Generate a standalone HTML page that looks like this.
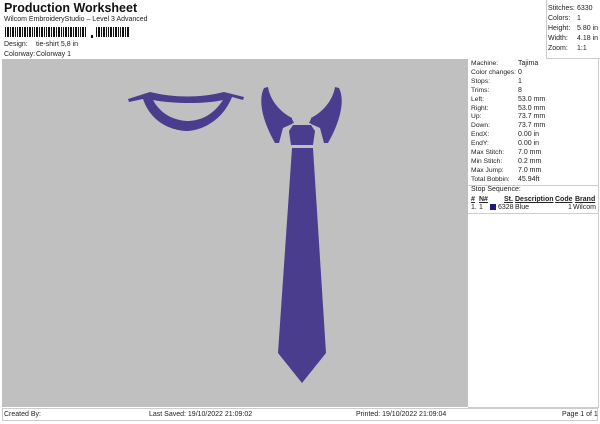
<!DOCTYPE html>
<html><head><style>
body{margin:0;width:600px;height:424px;background:#fff;font-family:"Liberation Sans",sans-serif;position:relative;overflow:hidden;color:#222}
.a{position:absolute;white-space:nowrap}
.s{font-size:7px}
</style></head><body>
<div class="a" style="left:4px;top:1px;font-size:12.5px;font-weight:bold;color:#111">Production Worksheet</div>
<div class="a s" style="left:4px;top:16px">Wilcom EmbroideryStudio – Level 3 Advanced</div>
<svg class="a" style="left:5px;top:27px" width="125" height="12">
<g fill="#111">
<rect x="0" y="0" width="1" height="10"/><rect x="2" y="0" width="2" height="10"/><rect x="5" y="0" width="1" height="10"/><rect x="7" y="0" width="2" height="10"/><rect x="10" y="0" width="1" height="10"/><rect x="12" y="0" width="1" height="10"/><rect x="14" y="0" width="2" height="10"/><rect x="17" y="0" width="1" height="10"/><rect x="19" y="0" width="2" height="10"/><rect x="22" y="0" width="1" height="10"/><rect x="24" y="0" width="2" height="10"/><rect x="27" y="0" width="1" height="10"/><rect x="29" y="0" width="1" height="10"/><rect x="31" y="0" width="2" height="10"/><rect x="34" y="0" width="1" height="10"/><rect x="36" y="0" width="2" height="10"/><rect x="39" y="0" width="1" height="10"/><rect x="41" y="0" width="1" height="10"/><rect x="43" y="0" width="2" height="10"/><rect x="46" y="0" width="1" height="10"/><rect x="48" y="0" width="2" height="10"/><rect x="51" y="0" width="1" height="10"/><rect x="53" y="0" width="2" height="10"/><rect x="56" y="0" width="1" height="10"/><rect x="58" y="0" width="1" height="10"/><rect x="60" y="0" width="2" height="10"/><rect x="63" y="0" width="1" height="10"/><rect x="65" y="0" width="2" height="10"/><rect x="68" y="0" width="1" height="10"/><rect x="70" y="0" width="2" height="10"/><rect x="73" y="0" width="1" height="10"/><rect x="75" y="0" width="1" height="10"/><rect x="77" y="0" width="2" height="10"/><rect x="80" y="0" width="1" height="10"/>
<rect x="86" y="8" width="2" height="3"/>
<rect x="91" y="0" width="1" height="10"/><rect x="93" y="0" width="2" height="10"/><rect x="96" y="0" width="1" height="10"/><rect x="98" y="0" width="2" height="10"/><rect x="101" y="0" width="1" height="10"/><rect x="103" y="0" width="1" height="10"/><rect x="105" y="0" width="2" height="10"/><rect x="108" y="0" width="1" height="10"/><rect x="110" y="0" width="2" height="10"/><rect x="113" y="0" width="1" height="10"/><rect x="115" y="0" width="1" height="10"/><rect x="117" y="0" width="2" height="10"/><rect x="120" y="0" width="1" height="10"/><rect x="122" y="0" width="2" height="10"/>
</g></svg>
<div class="a s" style="left:4px;top:41px">Design:</div><div class="a s" style="left:36px;top:41px">tie-shirt 5,8 in</div>
<div class="a s" style="left:4px;top:51px">Colorway:</div><div class="a s" style="left:36px;top:51px">Colorway 1</div>

<div class="a" style="left:546px;top:0;width:53px;height:58px;border-left:1px solid #ccc;border-right:1px solid #ccc;border-bottom:1px solid #ccc"></div>
<div class="a s" style="left:548px;top:4px;line-height:10px">Stitches:<br>Colors:<br>Height:<br>Width:<br>Zoom:</div>
<div class="a s" style="left:577px;top:4px;line-height:10px">6330<br>1<br>5.80 in<br>4.18 in<br>1:1</div>

<div class="a" style="left:2px;top:59px;width:466px;height:348px;background:#c0c0c0"></div>
<div class="a" style="left:468px;top:59px;width:130px;height:348px;border-right:1px solid #ccc;border-bottom:1px solid #ccc"></div>
<div class="a s" style="left:471px;top:60px;line-height:8.9px;font-size:6.7px">Machine:<br>Color changes:<br>Stops:<br>Trims:<br>Left:<br>Right:<br>Up:<br>Down:<br>EndX:<br>EndY:<br>Max Stitch:<br>Min Stitch:<br>Max Jump:<br>Total Bobbin:</div>
<div class="a s" style="left:518px;top:60px;line-height:8.9px">Tajima<br>0<br>1<br>8<br>53.0 mm<br>53.0 mm<br>73.7 mm<br>73.7 mm<br>0.00 in<br>0.00 in<br>7.0 mm<br>0.2 mm<br>7.0 mm<br>45.94ft</div>
<div class="a" style="left:468px;top:185px;width:130px;border-top:1px solid #ccc"></div>
<div class="a s" style="left:471px;top:186px">Stop Sequence:</div>
<div class="a s" style="left:471px;top:196px;font-weight:bold;text-decoration:underline">#</div>
<div class="a s" style="left:479px;top:196px;font-weight:bold;text-decoration:underline">N#</div>
<div class="a s" style="left:504px;top:196px;font-weight:bold;text-decoration:underline">St.</div>
<div class="a s" style="left:515px;top:196px;font-weight:bold;text-decoration:underline">Description</div>
<div class="a s" style="left:555px;top:196px;font-weight:bold;text-decoration:underline">Code</div>
<div class="a s" style="left:575px;top:196px;font-weight:bold;text-decoration:underline">Brand</div>
<div class="a s" style="left:471px;top:204px">1.</div><div class="a s" style="left:479px;top:204px">1</div>
<div class="a" style="left:490px;top:204px;width:6px;height:6px;background:#1e1a7a"></div>
<div class="a s" style="left:498px;top:204px">6328</div><div class="a s" style="left:515px;top:204px">Blue</div>
<div class="a s" style="left:568px;top:204px">1</div><div class="a s" style="left:573px;top:204px">Wilcom</div>
<div class="a" style="left:468px;top:213px;width:130px;border-top:1px solid #ccc"></div>

<svg class="a" style="left:0;top:0" width="600" height="424">
<g fill="#4b3d8e">
<path d="M128,99 L150,92 C175,98 200,98 224,92 L244,97 L243,100 L232,97 C222,122 200,131 186,131 C168,130 150,120 143,99 L129,102 Z"/>
<path d="M153,100 C175,104 205,104 223,100 C212,117 198,121 187,121 C172,120 160,113 153,100 Z" fill="#c0c0c0"/>
<path d="M264,88 L268,87 C270,100 280,112 292,118 L292,124 L283,128 L279,143 L275,143 C262,120 258,100 264,88 Z"/>
<path d="M339,88 L335,87 C333,100 323,112 311,118 L311,124 L320,128 L324,143 L328,143 C341,120 345,100 339,88 Z"/>
<path d="M288,120 L292,119 L294,123 L290,124 Z"/>
<path d="M315,120 L311,119 L309,123 L313,124 Z"/>
<path d="M293,125 L311,125 L315,131 L313,145 L291,145 L289,131 Z"/>
<path d="M292,148 L313,148 L326,353 L302,383 L278,353 Z"/>
</g>
</svg>

<div class="a" style="left:2px;top:408px;width:596px;height:13px;border:1px solid #ccc;box-sizing:border-box"></div>
<div class="a s" style="left:4px;top:411px">Created By:</div>
<div class="a s" style="left:149px;top:411px">Last Saved: 19/10/2022 21:09:02</div>
<div class="a s" style="left:356px;top:411px">Printed: 19/10/2022 21:09:04</div>
<div class="a s" style="left:562px;top:411px">Page 1 of 1</div>
</body></html>
